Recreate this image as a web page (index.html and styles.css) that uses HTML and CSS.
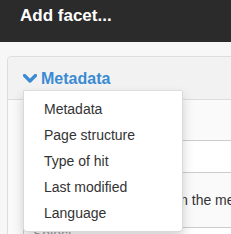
FILE: index.html
```html
<!DOCTYPE html>
<html lang="en">

<head>
  <meta charset="UTF-8">
  <title>Add facet</title>
  <link rel="stylesheet" href="styles.css">
</head>

<body>
  <div class="header">Add facet...</div>
  <div class="main">
    <div class="panel">
      <div class="panel-heading">
        <svg class="chevron" width="14" height="10" viewBox="0 0 14 10">
          <polyline points="1.5,1.5 7,7 12.5,1.5" fill="none" stroke="#3a8bd3" stroke-width="3.2" stroke-linecap="round" stroke-linejoin="round" />
        </svg>
        <span class="title">Metadata</span>
        <ul class="dropdown">
          <li>Metadata</li>
          <li>Page structure</li>
          <li>Type of hit</li>
          <li>Last modified</li>
          <li>Language</li>
        </ul>
      </div>
      <div class="panel-body">
        <div class="spacer"></div>
        <div class="input"></div>
        <div class="label">Pick a metadata field from the menu</div>
        <div class="select">Select</div>
      </div>
    </div>
  </div>
</body>

</html>
```

FILE: styles.css
```css
* {
  padding: 0;
  margin: 0;
  box-sizing: border-box;
}

html {
  overflow: hidden;
}

body {
  background-color: #f7f7f7;
  font-family: "Liberation Sans", Arial, sans-serif;
  color: #333;
}

.header {
  height: 42px;
  padding: 6px 20px 0;
  background-color: #2b2b2b;
  color: #fff;
  font-size: 17px;
  font-weight: bold;
  line-height: 20px;
}

.main {
  padding: 14px 0 0 7px;
}

.panel {
  margin-right: -30px;
  border: 1px solid #ddd;
  border-radius: 4px;
  background-color: #fafafa;
}

.panel-heading {
  position: relative;
  display: flex;
  align-items: center;
  height: 43px;
  padding: 2px 0 0 15px;
  background-color: #f2f2f2;
  border-bottom: 1px solid #ddd;
  border-radius: 4px 4px 0 0;
}

.chevron {
  margin: 0 4px 0 0;
}

.title {
  color: #3a8bd3;
  font-size: 16px;
  font-weight: bold;
}

.dropdown {
  position: absolute;
  top: 33px;
  left: 15px;
  z-index: 2;
  width: 160px;
  padding: 5px 0;
  list-style: none;
  background-color: #fff;
  border: 1px solid rgba(0, 0, 0, .15);
  border-top-color: #ddd;
  border-radius: 0 0 4px 4px;
  box-shadow: 0 6px 12px rgba(0, 0, 0, .175);
}

.dropdown li {
  padding: 3px 20px;
  font-size: 14px;
  line-height: 20px;
  color: #333;
}

.panel-body {
  padding: 0 0 0 15px;
}

.spacer {
  height: 40px;
}

.input {
  height: 33px;
  background-color: #fff;
  border: 1px solid #ccc;
}

.label {
  height: 54px;
  font-size: 14px;
  line-height: 54px;
  white-space: nowrap;
  padding-left: 3px;
}

.select {
  height: 30px;
  padding: 0 9px;
  background-color: #fff;
  border: 1px solid #ccc;
  font-size: 14px;
  line-height: 12px;
  color: #999;
}
```
